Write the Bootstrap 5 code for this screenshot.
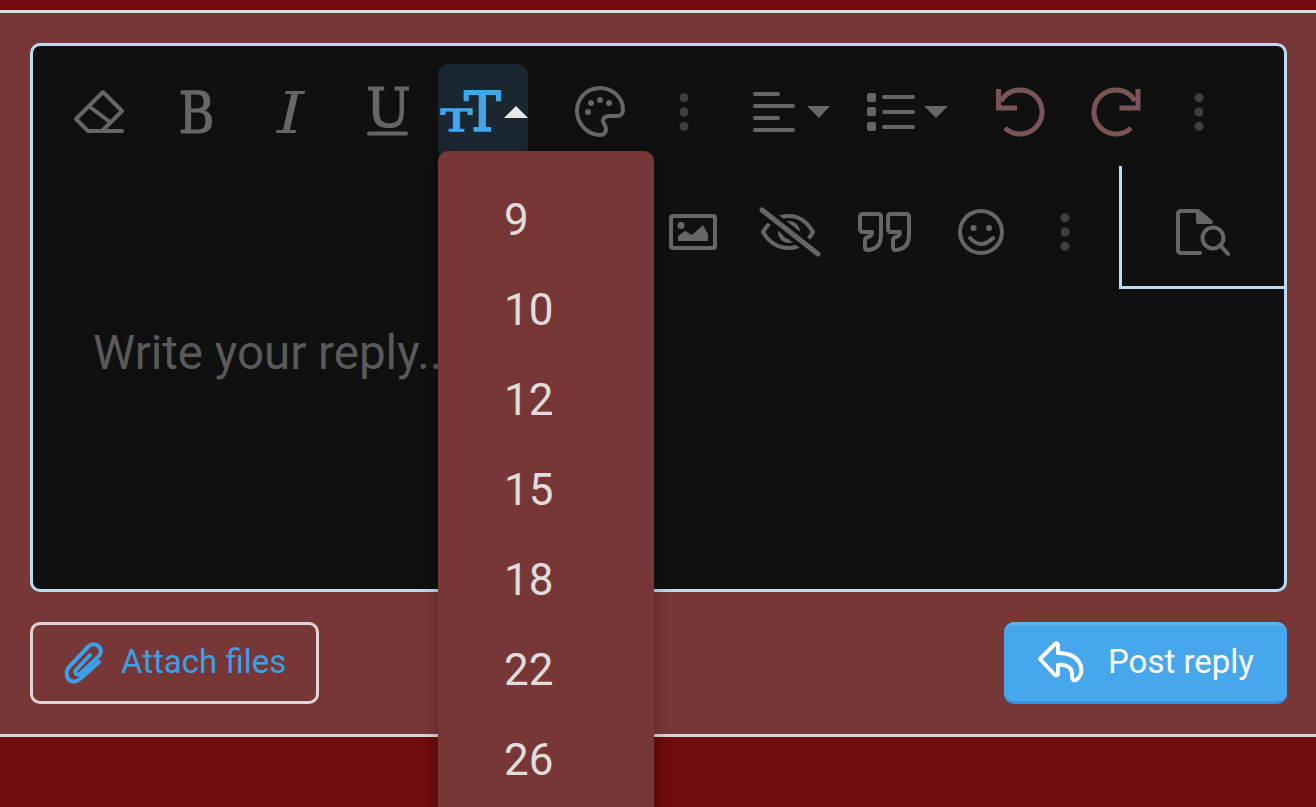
<!DOCTYPE html>
<html lang="en">
<head>
  <meta charset="UTF-8">
  <meta name="viewport" content="width=device-width, initial-scale=1.0">
  <title>Reply editor</title>
  <link href="https://cdn.jsdelivr.net/npm/bootstrap@5.3.3/dist/css/bootstrap.min.css" rel="stylesheet">
  <style>
    html, body { height: 807px; overflow: hidden; }
    body { background-color: #720c0c; font-family: Roboto, "Liberation Sans", sans-serif; }
    .top-strip { height: 10px; }
    .reply-panel {
      background-color: #773737;
      border-top: 3px solid #e2dede;
      border-bottom: 3px solid #d9d5d5;
      padding: 30px 29px 30px 30px;
    }
    .editor-box {
      height: 549px;
      background-color: #101010;
      border: 3px solid #b9dcf6;
      border-radius: 10px;
    }
    .tool-row { padding: 18px 0 0 18px; }
    .tool-row-2 { height: 128px; padding-top: 6px; }
    .tool-btn { width: 96px; height: 96px; padding: 0; border: 0; border-radius: 10px; flex: none; }
    .tool-btn svg, .preview-cell svg { display: block; }
    .tool-narrow { width: 48px; }
    .tool-open { width: 90px; background-color: #1a2730; }
    .tool-open:hover, .tool-open:active { background-color: #1a2730; }
    .tool-row-2 .tool-btn { margin-top: 18px; }
    .gap-3px { margin-left: 3px; }
    .gap-12px { margin-left: 12px; }
    .gap-18px { margin-left: 18px; }
    .gap-19px { margin-left: 19px; }
    .gap-24px { margin-left: 24px; }
    .gap-34px { margin-left: 34px; }
    .preview-cell {
      width: 165px;
      height: 123px;
      border-left: 3px solid #b9dcf6;
      border-bottom: 3px solid #b9dcf6;
      padding: 18px 0 0 33px;
      margin-left: 30px;
    }
    .ico { fill: none; stroke: #666; stroke-width: 4; stroke-linecap: round; stroke-linejoin: round; }
    .ico-fill { fill: #666; }
    .ico-dots { fill: #3f3f3f; }
    .ico-history { fill: none; stroke: #7a5555; stroke-width: 5; }
    .glyph { font-family: "DejaVu Serif", "Liberation Serif", serif; font-size: 57px; fill: #666; stroke: #666; stroke-width: 1.2; }
    .glyph-thin { stroke-width: 0; }
    .glyph-on { fill: #42a6ec; stroke: #42a6ec; }
    .reply-placeholder { padding: 39px 0 0 60px; font-size: 47.500px; line-height: 52px; color: #5a5a5a; }
    .size-menu {
      top: 105px;
      left: 405px;
      width: 216px;
      min-width: 0;
      height: 760px;
      padding: 24px 0 0;
      background-color: #773737;
      border: 0;
      border-radius: 10px;
      box-shadow: 0 6px 18px rgba(0, 0, 0, .3);
    }
    .size-menu .dropdown-item {
      height: 90px;
      padding: 0 0 0 66px;
      font-size: 44px;
      line-height: 90px;
      color: #e2dcdc;
    }
    .reply-actions { margin-top: 30px; }
    .action-btn {
      height: 82px;
      border-radius: 10px;
      font-size: 33px;
      line-height: 1;
      display: flex;
      align-items: center;
      padding: 0;
    }
    .action-btn span { position: relative; top: -2px; }
    .attach-btn { width: 289px; border: 3px solid #dcd6d6; color: #3aa0e8; }
    .attach-btn:hover { border-color: #dcd6d6; color: #3aa0e8; }
    .attach-btn span { left: 1px; }
    .post-btn {
      width: 283px;
      color: #fff;
      background-color: #46a7ec;
      border: 0;
      border-top: 3px solid #5fb3ef;
      border-bottom: 3px solid #2f95e3;
    }
    .post-btn:hover { color: #fff; background-color: #46a7ec; }
    .post-btn span { left: -1px; }
  </style>
</head>
<body>
  <div class="top-strip"></div>

  <div class="reply-panel">
    <div class="editor-box position-relative">

      <div class="tool-row d-flex">
        <button class="btn tool-btn" aria-label="Clear formatting">
          <svg width="96" height="96" viewBox="51 64 96 96"><path class="ico" d="M103 92 122 111 102 131H88L76 119ZM90 107 110 122M102 131H122"/></svg>
        </button>
        <button class="btn tool-btn" aria-label="Bold">
          <svg width="96" height="96" viewBox="147 64 96 96"><text class="glyph" transform="translate(178.500 133) scale(.86 1)">B</text></svg>
        </button>
        <button class="btn tool-btn" aria-label="Italic">
          <svg width="96" height="96" viewBox="243 64 96 96"><text class="glyph glyph-thin" font-style="italic" transform="translate(277 133) scale(1.200 1)">I</text></svg>
        </button>
        <button class="btn tool-btn" aria-label="Underline">
          <svg width="96" height="96" viewBox="339 64 96 96"><text class="glyph" transform="translate(366 127) scale(.98 1)" style="font-size:54px">U</text><path class="ico" d="M369 133.500H406"/></svg>
        </button>
        <button class="btn tool-open tool-btn gap-3px" aria-label="Font size" aria-expanded="true">
          <svg width="90" height="96" viewBox="438 64 90 96">
            <text class="glyph glyph-on" transform="translate(464 131) scale(1 1)" style="font-size:55px;stroke-width:1.800">T</text>
            <text class="glyph glyph-on" transform="translate(441 131) scale(1.600 1)" style="font-size:29px;stroke-width:1.500">T</text>
            <path d="M504 118H528L516 106Z" fill="#e8e8e8"/>
          </svg>
        </button>
        <button class="btn tool-btn gap-24px" aria-label="Text colour">
          <svg width="96" height="96" viewBox="552 64 96 96">
            <path class="ico" d="M600 88C587 88 577 98 577 111 577 124 588 135 600 135 604 135 606 132 606 129 606 125 603 124 603 121 603 117 606 116 610 116H617C621 116 623 113 623 110 623 97 612 88 600 88Z"/>
            <circle class="ico-fill" cx="591" cy="103" r="3"/><circle class="ico-fill" cx="600" cy="100" r="3"/><circle class="ico-fill" cx="609" cy="103" r="3"/><circle class="ico-fill" cx="588" cy="112" r="3"/>
          </svg>
        </button>
        <button class="btn tool-btn tool-narrow gap-12px" aria-label="More">
          <svg width="48" height="96" viewBox="660 64 48 96"><circle class="ico-dots" cx="684" cy="97.700" r="4.500"/><circle class="ico-dots" cx="684" cy="112" r="4.500"/><circle class="ico-dots" cx="684" cy="126.300" r="4.500"/></svg>
        </button>
        <button class="btn tool-btn gap-34px" aria-label="Align">
          <svg width="96" height="96" viewBox="742 64 96 96"><path class="ico" d="M755 94H778M755 106H793M755 118H778M755 130H793"/><path class="ico-fill" d="M807 106H830L819 118Z"/></svg>
        </button>
        <button class="btn tool-btn gap-19px" aria-label="List">
          <svg width="96" height="96" viewBox="857 64 96 96">
            <rect class="ico-fill" x="867" y="93" width="9" height="9" rx="2"/><rect class="ico-fill" x="867" y="107" width="9" height="9" rx="2"/><rect class="ico-fill" x="867" y="122" width="9" height="9" rx="2"/>
            <path class="ico" d="M884 97H913M884 112H913M884 127H913"/><path class="ico-fill" d="M924 106H948L936 118Z"/>
          </svg>
        </button>
        <button class="btn tool-btn gap-18px" aria-label="Undo">
          <svg width="96" height="96" viewBox="971 64 96 96"><path class="ico-history" d="M998.500 89V108H1017M1001 101A22 22 0 1 1 1005 128"/></svg>
        </button>
        <button class="btn tool-btn" aria-label="Redo">
          <svg width="96" height="96" viewBox="1067 64 96 96"><path class="ico-history" d="M1138 89V108H1119.500M1135 101A22 22 0 1 0 1131 128"/></svg>
        </button>
        <button class="btn tool-btn tool-narrow gap-12px" aria-label="More">
          <svg width="48" height="96" viewBox="1175 64 48 96"><circle class="ico-dots" cx="1199" cy="97.700" r="4.500"/><circle class="ico-dots" cx="1199" cy="112" r="4.500"/><circle class="ico-dots" cx="1199" cy="126.300" r="4.500"/></svg>
        </button>
      </div>

      <div class="tool-row-2 d-flex justify-content-end align-items-start">
        <button class="btn tool-btn" aria-label="Image">
          <svg width="96" height="96" viewBox="645 184 96 96">
            <rect class="ico" x="671" y="216" width="44" height="32" rx="2"/>
            <circle class="ico-fill" cx="681" cy="225.500" r="3.500"/>
            <path class="ico-fill" d="M678 241V236L685 231 692 235 703 225 708 234V241Z"/>
          </svg>
        </button>
        <button class="btn tool-btn" aria-label="Spoiler">
          <svg width="96" height="96" viewBox="741 184 96 96">
            <path class="ico" d="M763 232C770 220 780 216 789 216 798 216 806 220 813 232 806 244 798 248 789 248 780 248 770 244 763 232Z"/>
            <circle class="ico" cx="789" cy="232" r="9"/>
            <path d="M762 210 818 254" stroke="#101010" stroke-width="13" fill="none"/>
            <path class="ico" style="stroke-width:5" d="M762 210 818 254"/>
          </svg>
        </button>
        <button class="btn tool-btn" aria-label="Quote">
          <svg width="96" height="96" viewBox="837 184 96 96">
            <path class="ico" d="M863 214H878Q881 214 881 217V235Q881 249 868 250 865 250 865 247V240Q865 238 868 237 872 236 872 232H863Q860 232 860 229V217Q860 214 863 214Z"/>
            <path class="ico" transform="translate(28 0)" d="M863 214H878Q881 214 881 217V235Q881 249 868 250 865 250 865 247V240Q865 238 868 237 872 236 872 232H863Q860 232 860 229V217Q860 214 863 214Z"/>
          </svg>
        </button>
        <button class="btn tool-btn" aria-label="Emoji">
          <svg width="96" height="96" viewBox="933 184 96 96">
            <circle class="ico" cx="981" cy="232" r="21"/>
            <circle class="ico-fill" cx="973.500" cy="228" r="3"/><circle class="ico-fill" cx="989" cy="228" r="3"/>
            <path class="ico" d="M970 238Q981 250 993 238"/>
          </svg>
        </button>
        <button class="btn tool-btn tool-narrow gap-12px" aria-label="More">
          <svg width="48" height="96" viewBox="1041 184 48 96"><circle class="ico-dots" cx="1065" cy="217.700" r="4.500"/><circle class="ico-dots" cx="1065" cy="232" r="4.500"/><circle class="ico-dots" cx="1065" cy="246.300" r="4.500"/></svg>
        </button>
        <div class="preview-cell">
          <svg width="96" height="96" viewBox="1155 184 96 96">
            <path class="ico" d="M1197 211H1181Q1178 211 1178 214V250Q1178 253 1181 253H1200"/>
            <path class="ico" style="fill:#666" d="M1198 211V222H1211Z"/>
            <circle class="ico" cx="1213" cy="238" r="10.500"/>
            <path class="ico" d="M1220 245 1228 254"/>
          </svg>
        </div>
      </div>

      <div class="reply-placeholder">Write your reply...</div>

      <ul class="dropdown-menu show size-menu overflow-hidden">
        <li><a class="dropdown-item" href="#">9</a></li>
        <li><a class="dropdown-item" href="#">10</a></li>
        <li><a class="dropdown-item" href="#">12</a></li>
        <li><a class="dropdown-item" href="#">15</a></li>
        <li><a class="dropdown-item" href="#">18</a></li>
        <li><a class="dropdown-item" href="#">22</a></li>
        <li><a class="dropdown-item" href="#">26</a></li>
      </ul>
    </div>

    <div class="reply-actions d-flex justify-content-between">
      <button class="btn action-btn attach-btn">
        <svg width="87" height="76" viewBox="33 625 87 76">
          <path d="M99 662 80 679C74 684 68 681 67 676 66 672 67 669 70 666L88 647C92 643 97 644 99 647 102 650 101 654 98 657L80 674C77 676 74 673 76 670L90 655" fill="none" stroke="#3aa0e8" stroke-width="4" stroke-linecap="round" stroke-linejoin="round"/>
        </svg>
        <span>Attach files</span>
      </button>
      <button class="btn action-btn post-btn">
        <svg width="105" height="76" viewBox="1004 625 105 76">
          <path d="M1055 644 1040 659 1055 675Q1057 676 1058 674V665C1067 664 1073 668 1072 676Q1072 681 1076 680C1082 676 1083 668 1079 662 1075 655 1066 653 1058 653V645Q1057 642 1055 644Z" fill="none" stroke="#fff" stroke-width="4" stroke-linecap="round" stroke-linejoin="round"/>
        </svg>
        <span>Post reply</span>
      </button>
    </div>
  </div>
</body>
</html>
